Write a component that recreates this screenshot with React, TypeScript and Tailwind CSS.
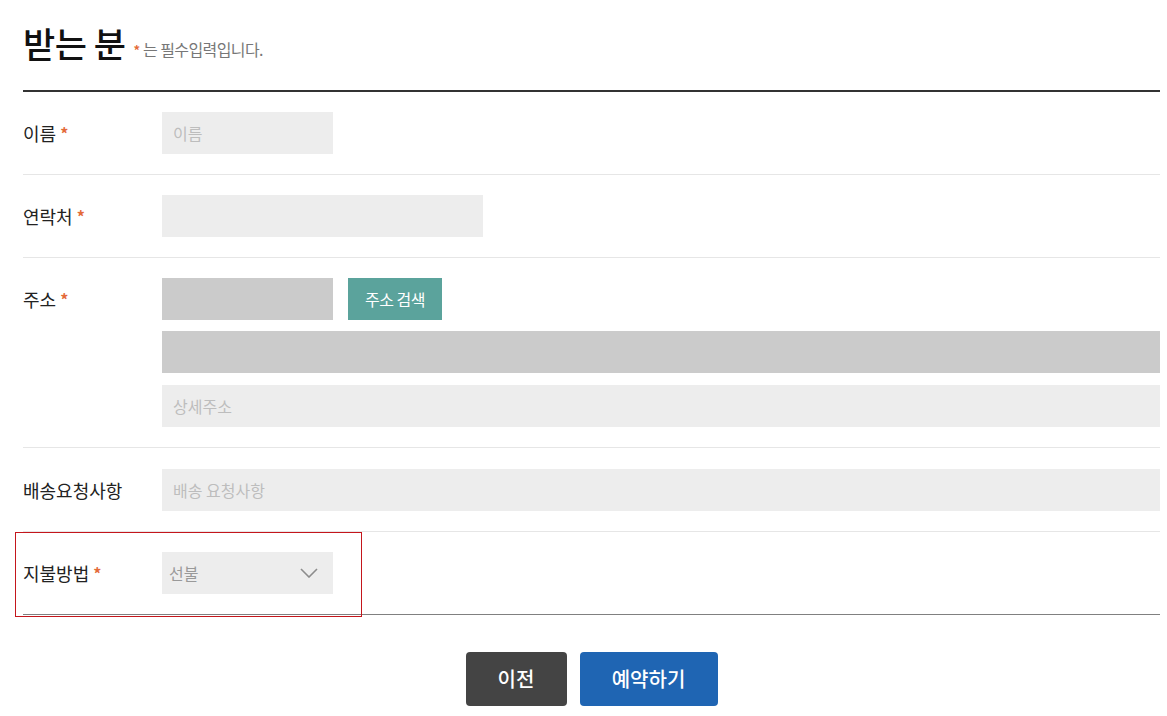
import React from "react";

const font = { fontFamily: '"Noto Sans CJK KR", "Noto Sans", sans-serif' };

function Star() {
  return <span className="ml-[4px] text-[16px] font-bold text-[#e46b3a]">*</span>;
}

function Label({ text, req }: { text: string; req?: boolean }) {
  return (
    <div className="w-[139px] shrink-0 h-[42px] flex items-center text-[18px] text-[#222]">
      {text}
      {req && <Star />}
    </div>
  );
}

function Input({ w, ph, bg = "bg-[#ededed]" }: { w: string; ph?: string; bg?: string }) {
  return (
    <div className={`${w} h-[42px] ${bg} flex items-center pl-[11px] text-[16px] text-[#bdbdbd]`}>
      {ph}
    </div>
  );
}

export default function App() {
  return (
    <div className="w-[1167px] h-[716px] bg-white overflow-hidden" style={font}>
      <div className="ml-[23px] w-[1137px]">
        <div className="h-[90px] flex items-end pb-[28px]">
          <span className="text-[35px] leading-[38px] text-[#111] font-medium tracking-[-0.5px]">받는 분</span>
          <span className="ml-[8px] mb-[3px] text-[13px] font-bold text-[#e46b3a]">*</span>
          <span className="ml-[3px] mb-[1px] text-[16px] text-[#777] tracking-[-0.6px]">는 필수입력입니다.</span>
        </div>
        <div className="border-t-2 border-[#333]" />

        <div className="flex pt-[20px] pb-[20px] border-b border-[#e6e6e6]">
          <Label text="이름" req />
          <Input w="w-[171px]" ph="이름" />
        </div>

        <div className="flex pt-[20px] pb-[20px] border-b border-[#e6e6e6]">
          <Label text="연락처" req />
          <Input w="w-[321px]" />
        </div>

        <div className="flex pt-[20px] pb-[20px] border-b border-[#e6e6e6]">
          <Label text="주소" req />
          <div className="flex-1 flex flex-col">
            <div className="flex gap-[15px]">
              <Input w="w-[171px]" bg="bg-[#cbcbcb]" />
              <div className="w-[94px] h-[42px] bg-[#5ba39c] text-white text-[16px] flex items-center justify-center tracking-[-0.5px]">
                주소 검색
              </div>
            </div>
            <div className="mt-[11px]">
              <Input w="w-full" bg="bg-[#cbcbcb]" />
            </div>
            <div className="mt-[12px]">
              <Input w="w-full" ph="상세주소" />
            </div>
          </div>
        </div>

        <div className="flex pt-[21px] pb-[20px] border-b border-[#e6e6e6]">
          <Label text="배송요청사항" />
          <Input w="flex-1" ph="배송 요청사항" />
        </div>

        <div className="relative flex pt-[20px] pb-[20px] border-b border-[#808080]">
          <Label text="지불방법" req />
          <div className="w-[171px] h-[42px] bg-[#ededed] flex items-center justify-between pl-[7px] pr-[15px] text-[16px] text-[#999]">
            <span>선불</span>
            <svg width="18" height="10" viewBox="0 0 18 10" fill="none">
              <path d="M1 1l8 8 8-8" stroke="#8c8c8c" strokeWidth="1.6" />
            </svg>
          </div>
          <div className="absolute left-[-8px] top-0 w-[347px] h-[85px] border border-[#c4161c] pointer-events-none" />
        </div>

        <div className="flex justify-center gap-[13px] mt-[37px]">
          <div className="w-[101px] h-[54px] rounded-[4px] bg-[#444] text-white text-[20px] font-medium flex items-center justify-center">
            이전
          </div>
          <div className="w-[138px] h-[54px] rounded-[4px] bg-[#1f65b3] text-white text-[20px] font-medium flex items-center justify-center">
            예약하기
          </div>
        </div>
      </div>
    </div>
  );
}
